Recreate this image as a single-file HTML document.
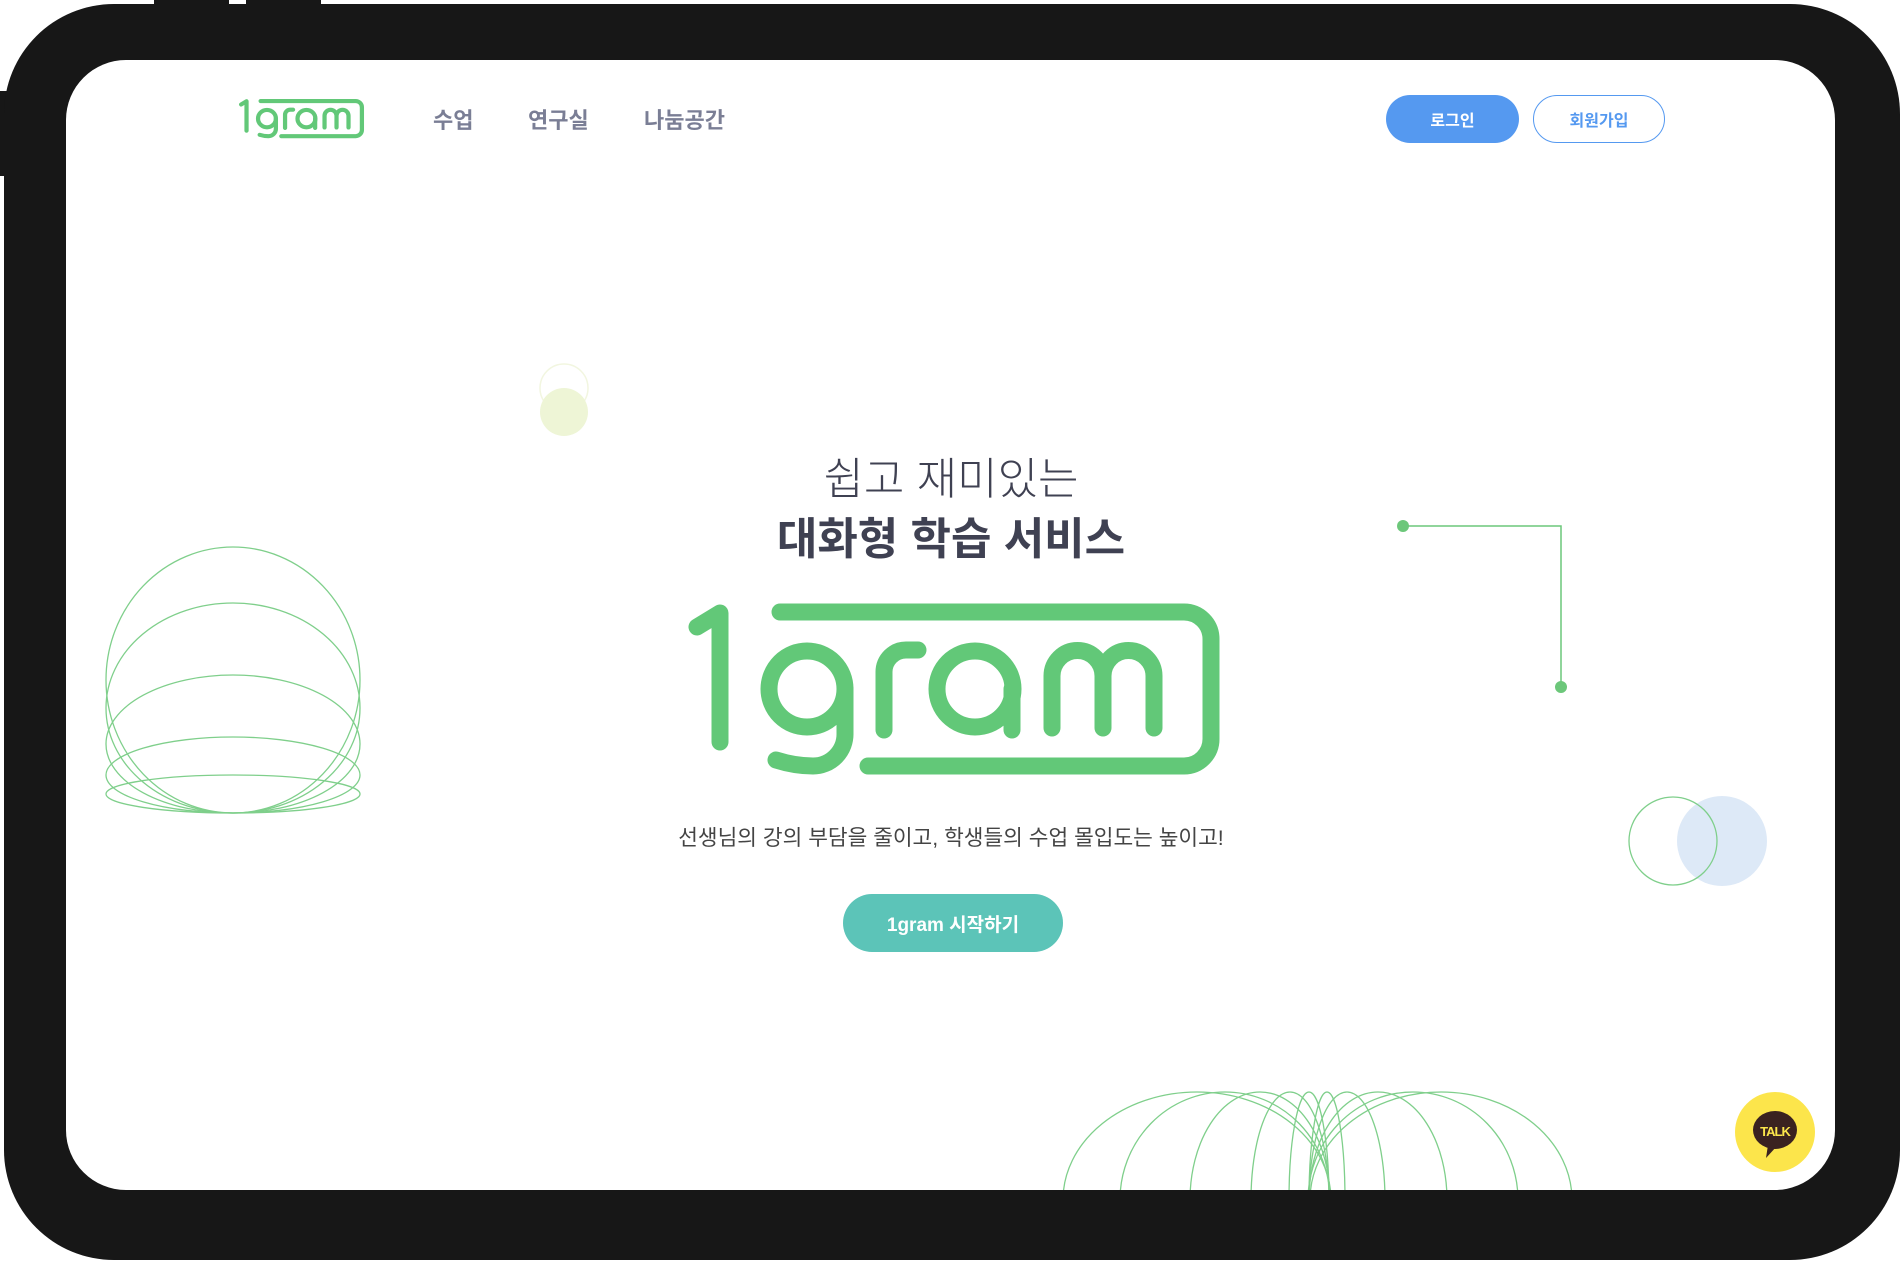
<!DOCTYPE html>
<html><head><meta charset="utf-8"><style>
*{margin:0;padding:0;box-sizing:border-box}
body{width:1902px;height:1262px;background:#fff;position:relative;overflow:hidden;font-family:"Liberation Sans","Noto Sans CJK KR",sans-serif}
.frame{position:absolute;left:4px;top:4px;width:1896px;height:1256px;background:#171717;border-radius:110px}
.screen{position:absolute;left:66px;top:60px;width:1769px;height:1130px;background:#fff;border-radius:60px;overflow:hidden}
.tab{position:absolute;background:#171717}
.nav{position:absolute;top:103px;font-size:22px;font-weight:bold;color:#7a7e95}
.btn{position:absolute;top:95px;height:48px;border-radius:24px;font-size:16px;font-weight:bold;display:flex;align-items:center;justify-content:center}
</style></head><body>
<div class="tab" style="left:154px;top:0;width:75px;height:8px"></div>
<div class="tab" style="left:246px;top:0;width:75px;height:8px"></div>
<div class="tab" style="left:0;top:91px;width:8px;height:85px"></div>
<div class="frame"></div>
<div class="screen"></div>
<svg style="position:absolute;left:0;top:0" width="1902" height="1262">
<defs><clipPath id="c"><rect x="66" y="60" width="1769" height="1130" rx="60"/></clipPath></defs>
<g clip-path="url(#c)" fill="none" stroke="#7fcf8b" stroke-width="1.3">
<ellipse cx="233" cy="680" rx="127" ry="133"/>
<ellipse cx="233" cy="708" rx="127" ry="105"/>
<ellipse cx="233" cy="744" rx="127" ry="69"/>
<ellipse cx="233" cy="775" rx="127" ry="38"/>
<ellipse cx="233" cy="794" rx="127" ry="19"/>
<ellipse cx="1197" cy="1200" rx="134" ry="108"/>
<ellipse cx="1225" cy="1200" rx="105" ry="108"/>
<ellipse cx="1260" cy="1200" rx="70" ry="108"/>
<ellipse cx="1290" cy="1200" rx="39" ry="108"/>
<ellipse cx="1309" cy="1200" rx="20" ry="108"/>
<ellipse cx="1327" cy="1200" rx="18" ry="108"/>
<ellipse cx="1347" cy="1200" rx="38" ry="108"/>
<ellipse cx="1378" cy="1200" rx="69" ry="108"/>
<ellipse cx="1413" cy="1200" rx="105" ry="108"/>
<ellipse cx="1441" cy="1200" rx="131" ry="108"/>
</g>
<circle cx="564" cy="388" r="24" fill="none" stroke="#f2f6e0" stroke-width="1.5"/>
<circle cx="564" cy="412" r="24" fill="#eef5d6"/>
<path d="M1403,526 H1561 V687" fill="none" stroke="#6cc77a" stroke-width="1.5"/>
<circle cx="1403" cy="526" r="6" fill="#6cc77a"/><circle cx="1561" cy="687" r="6" fill="#6cc77a"/>
<circle cx="1722" cy="841" r="45" fill="#dde9f7"/>
<circle cx="1673" cy="841" r="44" fill="none" stroke="#7fcf8b" stroke-width="1.3"/>
<circle cx="1775" cy="1132" r="40" fill="#fce54b"/>
<ellipse cx="1775" cy="1130" rx="22" ry="19" fill="#3a2220"/>
<path d="M1768,1145 L1766,1158 L1777,1146Z" fill="#3a2220"/>
<text x="1775" y="1136" text-anchor="middle" font-size="13" font-weight="bold" fill="#fce54b" font-family="Liberation Sans,sans-serif" letter-spacing="-1">TALK</text>
</svg>
<svg style="position:absolute;left:0;top:0" width="1902" height="1262" fill="none" stroke="#62c878" stroke-linecap="round" stroke-linejoin="round">
<g stroke-width="17">
<path d="M697,627 L720,613 V742"/>
<path d="M780,612 H1184 A27,27 0 0 1 1211,639 V739 A27,27 0 0 1 1184,766 H868"/>
<circle cx="807" cy="689" r="38"/>
<path d="M845,689 V733 A32,32 0 0 1 813,766 Q795,766 776,760"/>
<path d="M884,730 V672 A22,22 0 0 1 906,650 H918"/>
<circle cx="975" cy="689" r="38"/>
<path d="M1012,689 V730"/>
<path d="M1052,728 V676 A25.5,25.5 0 0 1 1103,676 V728 M1103,676 A25.5,25.5 0 0 1 1154,676 V728"/>
</g>
<g transform="translate(239,99) scale(0.235,0.228) translate(-688,-603)" stroke-width="18">
<path d="M697,627 L720,613 V742"/>
<path d="M780,612 H1184 A27,27 0 0 1 1211,639 V739 A27,27 0 0 1 1184,766 H868"/>
<circle cx="807" cy="689" r="38"/>
<path d="M845,689 V733 A32,32 0 0 1 813,766 Q795,766 776,760"/>
<path d="M884,730 V672 A22,22 0 0 1 906,650 H918"/>
<circle cx="975" cy="689" r="38"/>
<path d="M1012,689 V730"/>
<path d="M1052,728 V676 A25.5,25.5 0 0 1 1103,676 V728 M1103,676 A25.5,25.5 0 0 1 1154,676 V728"/>
</g>
</svg>
<div class="nav" style="left:433px">수업</div>
<div class="nav" style="left:528px">연구실</div>
<div class="nav" style="left:644px">나눔공간</div>
<div class="btn" style="left:1386px;width:133px;background:#5599f0;color:#fff">로그인</div>
<div class="btn" style="left:1533px;width:132px;border:1.5px solid #5599f0;color:#5599f0;background:#fff">회원가입</div>
<div style="position:absolute;left:0;width:1902px;text-align:center;top:443px;font-size:44px;font-weight:300;color:#3f4152">쉽고 재미있는</div>
<div style="position:absolute;left:0;width:1902px;text-align:center;top:503px;font-size:44px;font-weight:bold;color:#3f4152">대화형 학습 서비스</div>
<div style="position:absolute;left:0;width:1902px;text-align:center;top:821px;font-size:21.4px;color:#444">선생님의 강의 부담을 줄이고, 학생들의 수업 몰입도는 높이고!</div>
<div style="position:absolute;left:843px;top:894px;width:220px;height:58px;border-radius:29px;background:#5cc4b8;color:#fff;font-size:19px;font-weight:bold;display:flex;align-items:center;justify-content:center">1gram 시작하기</div>
</body></html>
